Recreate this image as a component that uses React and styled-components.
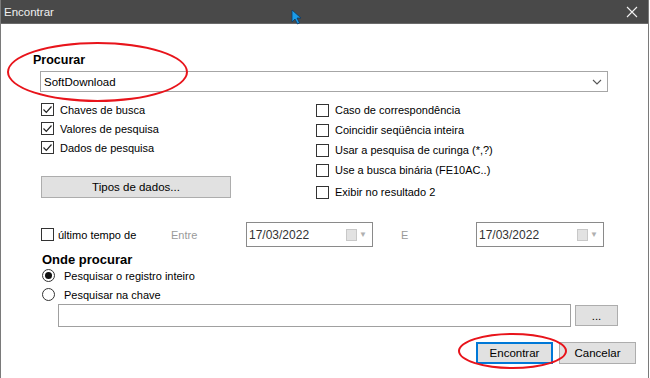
import React from "react";
import styled, { createGlobalStyle } from "styled-components";

const GlobalStyle = createGlobalStyle`
  * { box-sizing: border-box; }
  body {
    margin: 0;
    background: #fff;
    font-family: "Liberation Sans", Arial, sans-serif;
  }
`;

const Screen = styled.div`
  position: relative;
  width: 650px;
  height: 378px;
  overflow: hidden;
  background: #fff;
`;

const Window = styled.div`
  width: 649px;
  height: 378px;
  display: flex;
  flex-direction: column;
  border-left: 1px solid #7a7a7a;
  border-right: 1px solid #7a7a7a;
  font-size: 11px;
  color: #000;
`;

const TitleBar = styled.div`
  height: 24px;
  flex: none;
  display: flex;
  align-items: center;
  justify-content: space-between;
  padding: 0 10px 0 3px;
  background: #494949;
  border-bottom: 1px solid #6a6a6a;
  color: #f0f0f0;
  font-size: 11.5px;
`;

const Body = styled.div`
  flex: 1;
  display: flex;
  flex-direction: column;
  padding: 0 12px 0 32px;
`;

const SectionLabel = styled.div`
  font-weight: bold;
  font-size: ${(p) => p.size || 12.5}px;
  line-height: 12px;
  margin-top: ${(p) => p.top}px;
  margin-left: ${(p) => p.left || 0}px;
`;

const Combo = styled.div`
  margin: 5px 0 0 7px;
  width: 568px;
  height: 21px;
  display: flex;
  align-items: center;
  justify-content: space-between;
  padding: 0 5px 0 3px;
  border: 1px solid #a6a6a6;
  font-size: 11.5px;
`;

const OptionsGrid = styled.div`
  margin: 8px 0 0 8px;
  display: grid;
  grid-template-columns: 275px 1fr;
`;

const Column = styled.div`
  display: flex;
  flex-direction: column;
`;

const OptionRow = styled.label`
  height: ${(p) => p.h || 20}px;
  margin-top: ${(p) => p.gap || 0}px;
  display: flex;
  align-items: center;
  gap: ${(p) => p.space || 6}px;
  white-space: nowrap;
`;

const Box = styled.span`
  width: 13px;
  height: 13px;
  flex: none;
  border: 1px solid #333;
  background: #fff;
  display: flex;
  align-items: center;
  justify-content: center;
`;

const Radio = styled.span`
  width: 13px;
  height: 13px;
  flex: none;
  border: 1px solid #333;
  border-radius: 50%;
  display: flex;
  align-items: center;
  justify-content: center;
  &::after {
    content: "";
    width: 7px;
    height: 7px;
    border-radius: 50%;
    background: ${(p) => (p.on ? "#111" : "transparent")};
  }
`;

const Button = styled.div`
  width: ${(p) => p.w}px;
  height: ${(p) => p.h || 22}px;
  flex: none;
  display: flex;
  align-items: center;
  justify-content: center;
  background: #e1e1e1;
  border: 1px solid ${(p) => (p.primary ? "#0078d7" : "#adadad")};
  box-shadow: ${(p) => (p.primary ? "inset 0 0 0 1px #0078d7" : "none")};
  font-size: 11.5px;
  margin-top: ${(p) => p.top || 0}px;
`;

const DateRow = styled.div`
  margin: 20px 0 0 8px;
  height: 25px;
  display: flex;
  align-items: center;
`;

const Muted = styled.span`
  color: ${(p) => (p.dark ? "#000" : "#9a9a9a")};
  width: ${(p) => p.w}px;
  padding-left: ${(p) => p.indent || 0}px;
  flex: none;
`;

const DatePicker = styled.div`
  width: ${(p) => p.w}px;
  height: 25px;
  flex: none;
  display: flex;
  align-items: center;
  justify-content: space-between;
  padding: 0 5px 0 2px;
  border: 1px solid #8a8a8a;
  color: #333;
  font-size: 12px;
`;

const CalIcon = styled.span`
  display: flex;
  align-items: center;
  gap: 2px;
  color: #b0b0b0;
  font-size: 8px;
  &::before {
    content: "";
    width: 9px;
    height: 10px;
    background: #e2e2e2;
    border: 1px solid #c8c8c8;
  }
`;

const RadioGroup = styled.div`
  margin-left: 9px;
  display: flex;
  flex-direction: column;
`;

const PathRow = styled.div`
  margin-left: 25px;
  display: flex;
  align-items: center;
  gap: 4px;
`;

const TextInput = styled.div`
  width: 513px;
  height: 23px;
  border: 1px solid #a0a0a0;
`;

const Footer = styled.div`
  margin-top: 15px;
  display: flex;
  justify-content: flex-end;
  gap: 6px;
`;

const Annotation = styled.div`
  position: absolute;
  left: ${(p) => p.x}px;
  top: ${(p) => p.y}px;
  width: ${(p) => p.w}px;
  height: ${(p) => p.h}px;
  border: 2px solid #e8141b;
  border-radius: 50%;
  pointer-events: none;
`;

const Cursor = styled.svg`
  position: absolute;
  left: 291px;
  top: 9px;
`;

const Check = () => (
  <svg width="11" height="11" viewBox="0 0 11 11">
    <path d="M1.5 5.5 L4.3 8.3 L9.5 2.5" fill="none" stroke="#222" strokeWidth="1.2" />
  </svg>
);

const CheckOption = ({ checked, label, h, gap }) => (
  <OptionRow h={h} gap={gap}>
    <Box>{checked && <Check />}</Box>
    {label}
  </OptionRow>
);

const leftOptions = ["Chaves de busca", "Valores de pesquisa", "Dados de pesquisa"];
const rightOptions = [
  "Caso de correspondência",
  "Coincidir seqüência inteira",
  "Usar a pesquisa de curinga (*,?)",
  "Use a busca binária (FE10AC..)",
];

export default function App() {
  return (
    <Screen>
      <GlobalStyle />
      <Window>
        <TitleBar>
          <span>Encontrar</span>
          <svg width="12" height="12" viewBox="0 0 12 12">
            <path d="M1 1 L11 11 M11 1 L1 11" stroke="#f2f2f2" strokeWidth="1.1" />
          </svg>
        </TitleBar>
        <Body>
          <SectionLabel top={30}>Procurar</SectionLabel>
          <Combo>
            <span>SoftDownload</span>
            <svg width="10" height="6" viewBox="0 0 10 6">
              <path d="M1 1 L5 5 L9 1" fill="none" stroke="#555" strokeWidth="1.1" />
            </svg>
          </Combo>

          <OptionsGrid>
            <Column>
              {leftOptions.map((o) => (
                <CheckOption key={o} checked label={o} h={19} />
              ))}
              <Button w={190} top={19}>Tipos de dados...</Button>
            </Column>
            <Column>
              {rightOptions.map((o) => (
                <CheckOption key={o} label={o} />
              ))}
              <CheckOption label="Exibir no resultado 2" gap={2} />
            </Column>
          </OptionsGrid>

          <DateRow>
            <OptionRow space={4} h={25}>
              <Box />
              <Muted w={113} dark>último tempo de</Muted>
            </OptionRow>
            <Muted w={75}>Entre</Muted>
            <DatePicker w={127}>
              17/03/2022
              <CalIcon>▼</CalIcon>
            </DatePicker>
            <Muted w={103} indent={28}>E</Muted>
            <DatePicker w={128}>
              17/03/2022
              <CalIcon>▼</CalIcon>
            </DatePicker>
          </DateRow>

          <SectionLabel top={7} left={9} size={13}>Onde procurar</SectionLabel>
          <RadioGroup>
            <OptionRow h={19} space={9}>
              <Radio on />
              Pesquisar o registro inteiro
            </OptionRow>
            <OptionRow h={19} space={9}>
              <Radio />
              Pesquisar na chave
            </OptionRow>
          </RadioGroup>
          <PathRow>
            <TextInput />
            <Button w={43} h={21}>...</Button>
          </PathRow>

          <Footer>
            <Button w={77} primary>Encontrar</Button>
            <Button w={77}>Cancelar</Button>
          </Footer>
        </Body>
      </Window>

      <Annotation x={7} y={42} w={181} h={60} />
      <Annotation x={458} y={333} w={109} h={36} />
      <Cursor width="12" height="16" viewBox="0 0 12 16">
        <path d="M1 1 L1 13 L4 10 L6.5 15 L8.5 14 L6 9 L10 9 Z" fill="#1a9be8" stroke="#0b3a66" strokeWidth="0.8" />
      </Cursor>
    </Screen>
  );
}
